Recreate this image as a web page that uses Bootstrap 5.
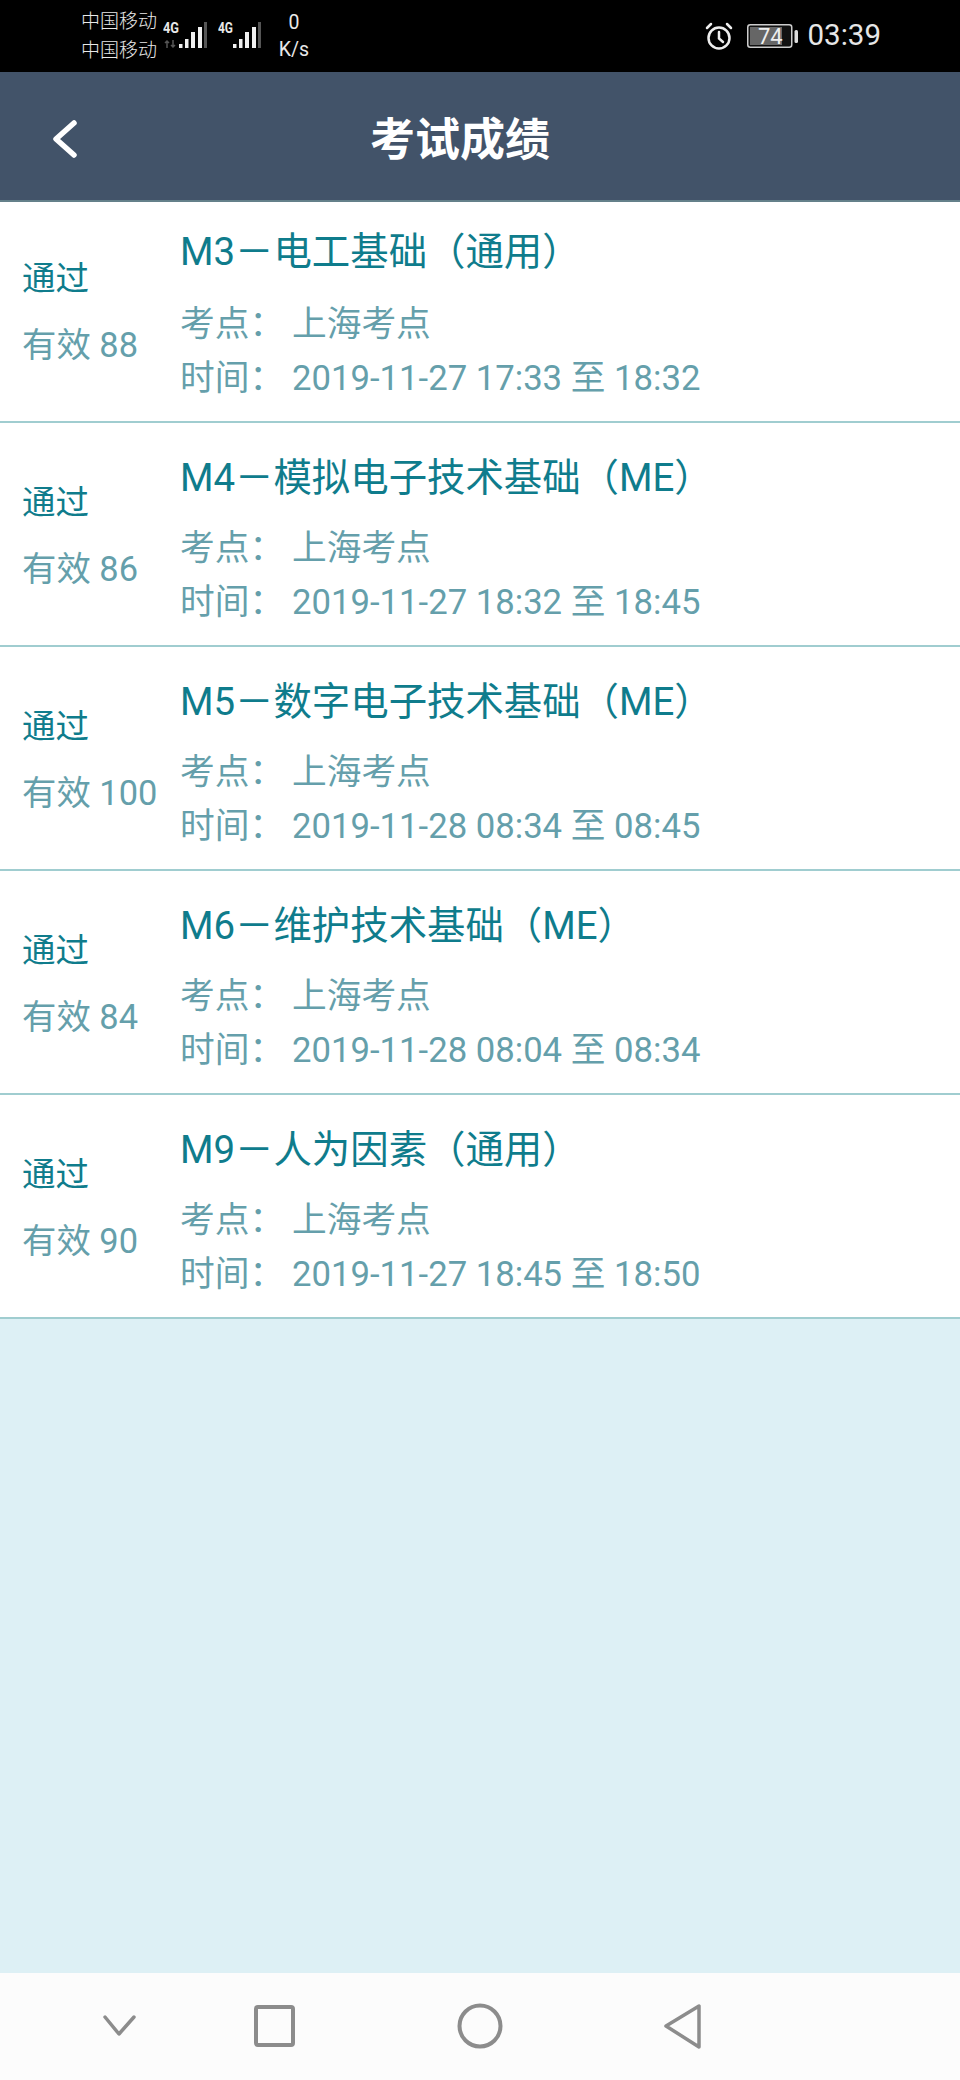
<!DOCTYPE html>
<html lang="zh"><head><meta charset="utf-8">
<link href="https://cdn.jsdelivr.net/npm/bootstrap@5.3.0/dist/css/bootstrap.min.css" rel="stylesheet">
<style>
html,body{height:2080px;margin:0}
body{font-family:Roboto,"Noto Sans CJK SC",sans-serif;background:#ddf0f5;overflow:hidden}
.shell{height:2080px}
.sbar{height:72px;background:#000;color:#e8e8e8;padding-left:81px;padding-right:79px}
.carrier{font-size:19px;line-height:29px;width:80px;white-space:nowrap;font-weight:300}
.sig{width:46px;height:34px;flex:none}
.sig-a{margin-left:2px}
.sig-b{margin-left:9px}
.speed{font-size:19.500px;line-height:27px;margin-left:10px;width:40px;text-align:center}
.clock{font-size:29.500px;color:#e6e6e6;margin-left:10px;line-height:1}
.batt{width:51px;height:24px;margin-left:14px}
.hdr{height:130px;background:#425369;border-bottom:2px solid #64808a;color:#fff;position:relative}
.hdr-title{font-size:45px;font-weight:700;line-height:1;padding-top:8px;padding-right:40px}
.back{position:absolute;left:50px;top:47px}
.item{height:224px;background:#fff;border-bottom:2px solid #a0cdd0}
.item-first{height:221px}
.left{width:180px;padding-left:22px;padding-top:3px;flex:none}
.pass{font-size:33.500px;line-height:44px;color:#0f7c8c}
.score{font-size:34.400px;line-height:44px;color:#659fab;margin-top:22px;white-space:nowrap}
.body-col{padding-top:14px}
.item-first .body-col{padding-top:8px}
.item-first .left{padding-top:1px}
.ttl{font-size:38.400px;line-height:50px;color:#0f7c8c;white-space:nowrap;margin-bottom:18px}
.item-first .ttl{margin-bottom:20px}
.meta{font-size:34.700px;line-height:54px;color:#659fab;white-space:nowrap}
.meta-l{width:112px;display:inline-block}
.navb{height:107px;background:#fcfcfc}
</style></head><body>
<div class="shell d-flex flex-column">
<div class="sbar d-flex align-items-center">
 <div class="carrier"><div>中国移动</div><div>中国移动</div></div>
 <svg class="sig sig-a" viewBox="0 0 46 34"><text x="0" y="14" font-size="15.500" font-weight="700" fill="#e8e8e8" font-family="Roboto" textLength="16" lengthAdjust="spacingAndGlyphs">4G</text><path d="M4 29v-7M2 24l2-2 2 2M10 21v7M8 26l2 2 2-2" stroke="#555" stroke-width="1.500" fill="none"/><g fill="#f0f0f0"><rect x="16" y="25" width="3.500" height="4"/><rect x="22" y="20" width="3.500" height="9"/><rect x="28" y="13" width="4" height="16"/><rect x="35" y="8" width="4" height="21"/></g><rect x="41" y="3" width="3" height="26" fill="#555"/></svg>
 <svg class="sig sig-b" viewBox="0 0 46 34"><text x="0" y="14" font-size="15.500" font-weight="700" fill="#e8e8e8" font-family="Roboto" textLength="15" lengthAdjust="spacingAndGlyphs">4G</text><g fill="#f0f0f0"><rect x="15" y="25" width="3.500" height="4"/><rect x="21" y="20" width="3.500" height="9"/><rect x="27" y="13" width="4" height="16"/><rect x="34" y="8" width="4" height="21"/></g><rect x="40" y="3" width="3" height="26" fill="#555"/></svg>
 <div class="speed"><div>0</div><div>K/s</div></div>
 <div class="ms-auto d-flex align-items-center">
  <svg width="28" height="28" viewBox="0 0 28 28" fill="none" stroke="#eee" stroke-width="2.500"><circle cx="14" cy="16" r="10.500"/><path d="M14 10v6.500l4 3.500M2 6l4-4M26 6l-4-4" stroke-linecap="round"/></svg>
  <svg class="batt" viewBox="0 0 51 24"><rect x=".75" y=".75" width="44" height="22.500" rx="2.500" fill="#111" stroke="#ccc" stroke-width="1.500"/><rect x="3" y="3" width="32" height="18" fill="#666"/><rect x="47.500" y="6" width="3.500" height="13" rx="1.500" fill="#ddd"/><text x="11" y="20" font-size="22" fill="#eee" font-family="Roboto">74</text></svg>
  <div class="clock">03:39</div>
 </div>
</div>
<div class="hdr d-flex align-items-center justify-content-center">
 <svg class="back" width="30" height="42" viewBox="0 0 30 42" fill="none" stroke="#fff" stroke-width="5.500" stroke-linecap="round" stroke-linejoin="round"><path d="M24 4 6 20l18 16"/></svg>
 <div class="hdr-title">考试成绩</div>
</div>

<div class="item item-first d-flex align-items-center">
 <div class="left"><div class="pass">通过</div><div class="score">有效 88</div></div>
 <div class="body-col"><div class="ttl">M3－电工基础（通用）</div><div class="meta"><span class="meta-l">考点：</span>上海考点</div><div class="meta"><span class="meta-l">时间：</span>2019-11-27 17:33 至 18:32</div></div>
</div>
<div class="item d-flex align-items-center">
 <div class="left"><div class="pass">通过</div><div class="score">有效 86</div></div>
 <div class="body-col"><div class="ttl">M4－模拟电子技术基础（ME）</div><div class="meta"><span class="meta-l">考点：</span>上海考点</div><div class="meta"><span class="meta-l">时间：</span>2019-11-27 18:32 至 18:45</div></div>
</div>
<div class="item d-flex align-items-center">
 <div class="left"><div class="pass">通过</div><div class="score">有效 100</div></div>
 <div class="body-col"><div class="ttl">M5－数字电子技术基础（ME）</div><div class="meta"><span class="meta-l">考点：</span>上海考点</div><div class="meta"><span class="meta-l">时间：</span>2019-11-28 08:34 至 08:45</div></div>
</div>
<div class="item d-flex align-items-center">
 <div class="left"><div class="pass">通过</div><div class="score">有效 84</div></div>
 <div class="body-col"><div class="ttl">M6－维护技术基础（ME）</div><div class="meta"><span class="meta-l">考点：</span>上海考点</div><div class="meta"><span class="meta-l">时间：</span>2019-11-28 08:04 至 08:34</div></div>
</div>
<div class="item d-flex align-items-center">
 <div class="left"><div class="pass">通过</div><div class="score">有效 90</div></div>
 <div class="body-col"><div class="ttl">M9－人为因素（通用）</div><div class="meta"><span class="meta-l">考点：</span>上海考点</div><div class="meta"><span class="meta-l">时间：</span>2019-11-27 18:45 至 18:50</div></div>
</div>
<div class="flex-grow-1"></div>
<div class="navb">
 <svg class="d-block" width="960" height="107" viewBox="0 1973 960 107" fill="none" stroke="#8c8c8c" stroke-linejoin="round" stroke-linecap="round">
  <path d="M105 2017l14 17 15-17" stroke-width="3.500"/>
  <rect x="256" y="2007" width="37" height="38" rx="2" stroke-width="4"/>
  <circle cx="480" cy="2026" r="20.500" stroke-width="4"/>
  <path d="M699 2006v41l-33-21z" stroke-width="3.500"/>
 </svg>
</div>
</div>
</body></html>
